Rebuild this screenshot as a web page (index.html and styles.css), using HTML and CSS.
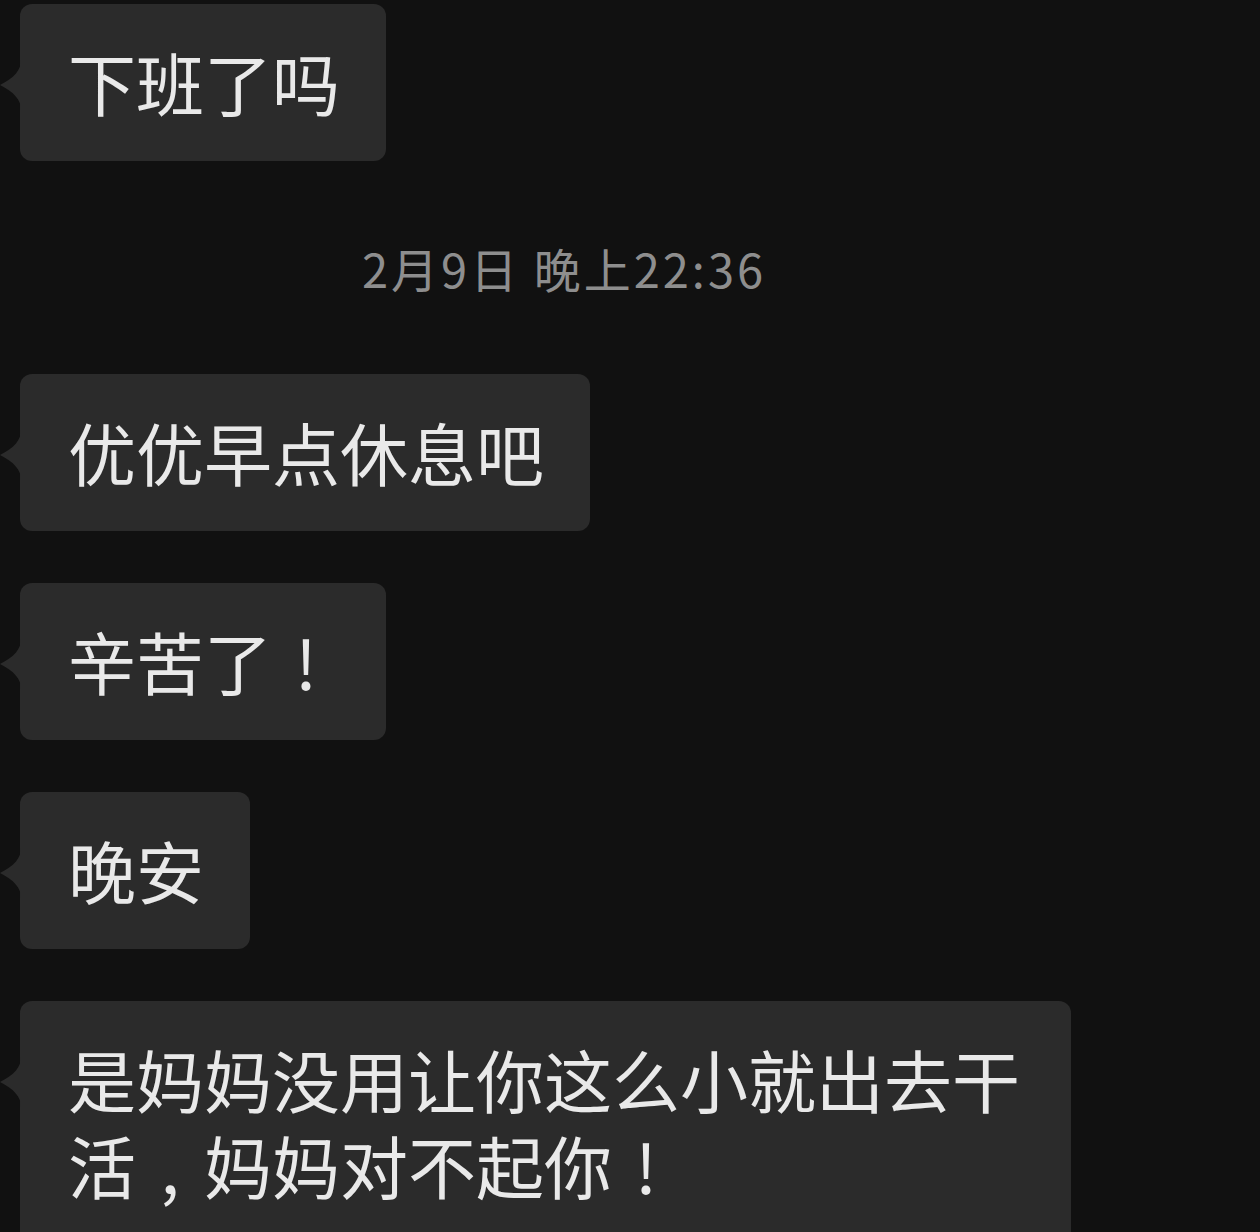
FILE: index.html
```html
<!DOCTYPE html>
<html lang="zh-CN">
<head>
  <meta charset="UTF-8" />
  <title>聊天记录</title>
  <link rel="stylesheet" href="styles.css">
</head>
<body>

  <div class="chat">
    <div class="msg">
      <span class="tail"></span>
      <div class="bubble">下班了吗</div>
    </div>

    <div class="time">2月9日 晚上22:36</div>

    <div class="msg">
      <span class="tail"></span>
      <div class="bubble">优优早点休息吧</div>
    </div>

    <div class="msg">
      <span class="tail"></span>
      <div class="bubble">辛苦了<span class="punct">!</span></div>
    </div>

    <div class="msg">
      <span class="tail"></span>
      <div class="bubble">晚安</div>
    </div>

    <div class="msg">
      <span class="tail"></span>
      <div class="bubble wide">是妈妈没用让你这么小就出去干活<span class="punct">,</span>妈妈对不起你<span class="punct">!</span></div>
    </div>
  </div>

</body>
</html>
```

FILE: styles.css
```css
body {
  margin: 0;
  padding: 0;
  background-color: #111111;
  font-family: "Noto Sans CJK SC", "Noto Sans", sans-serif;
  overflow: hidden;
}

.chat {
  display: flex;
  flex-direction: column;
  align-items: flex-start;
  gap: 52px;
  padding: 4px 0 0 20px;
}

/* message row with bubble tail */
.msg {
  position: relative;
}

.tail {
  position: absolute;
  left: -20px;
  top: 56px;
  width: 21px;
  height: 50px;
  background-color: #2b2b2b;
  clip-path: path("M21 0 C21 10 14 18 0 25 C14 32 21 40 21 50 Z");
}

.bubble {
  background-color: #2b2b2b;
  color: #e9e9e9;
  font-size: 68px;
  line-height: 86px;
  padding: 35px 46px 36px 48px;
  border-radius: 12px;
}

.bubble.wide {
  width: 957px;
  padding-bottom: 60px;
}

/* full-width punctuation, centred in its cell */
.punct {
  display: inline-block;
  width: 1em;
  text-align: center;
}

/* timestamp between messages */
.time {
  margin: 25px 0 24px 342px;
  color: #8e8e8e;
  font-size: 47px;
  line-height: 60px;
  letter-spacing: 3px;
}
```
